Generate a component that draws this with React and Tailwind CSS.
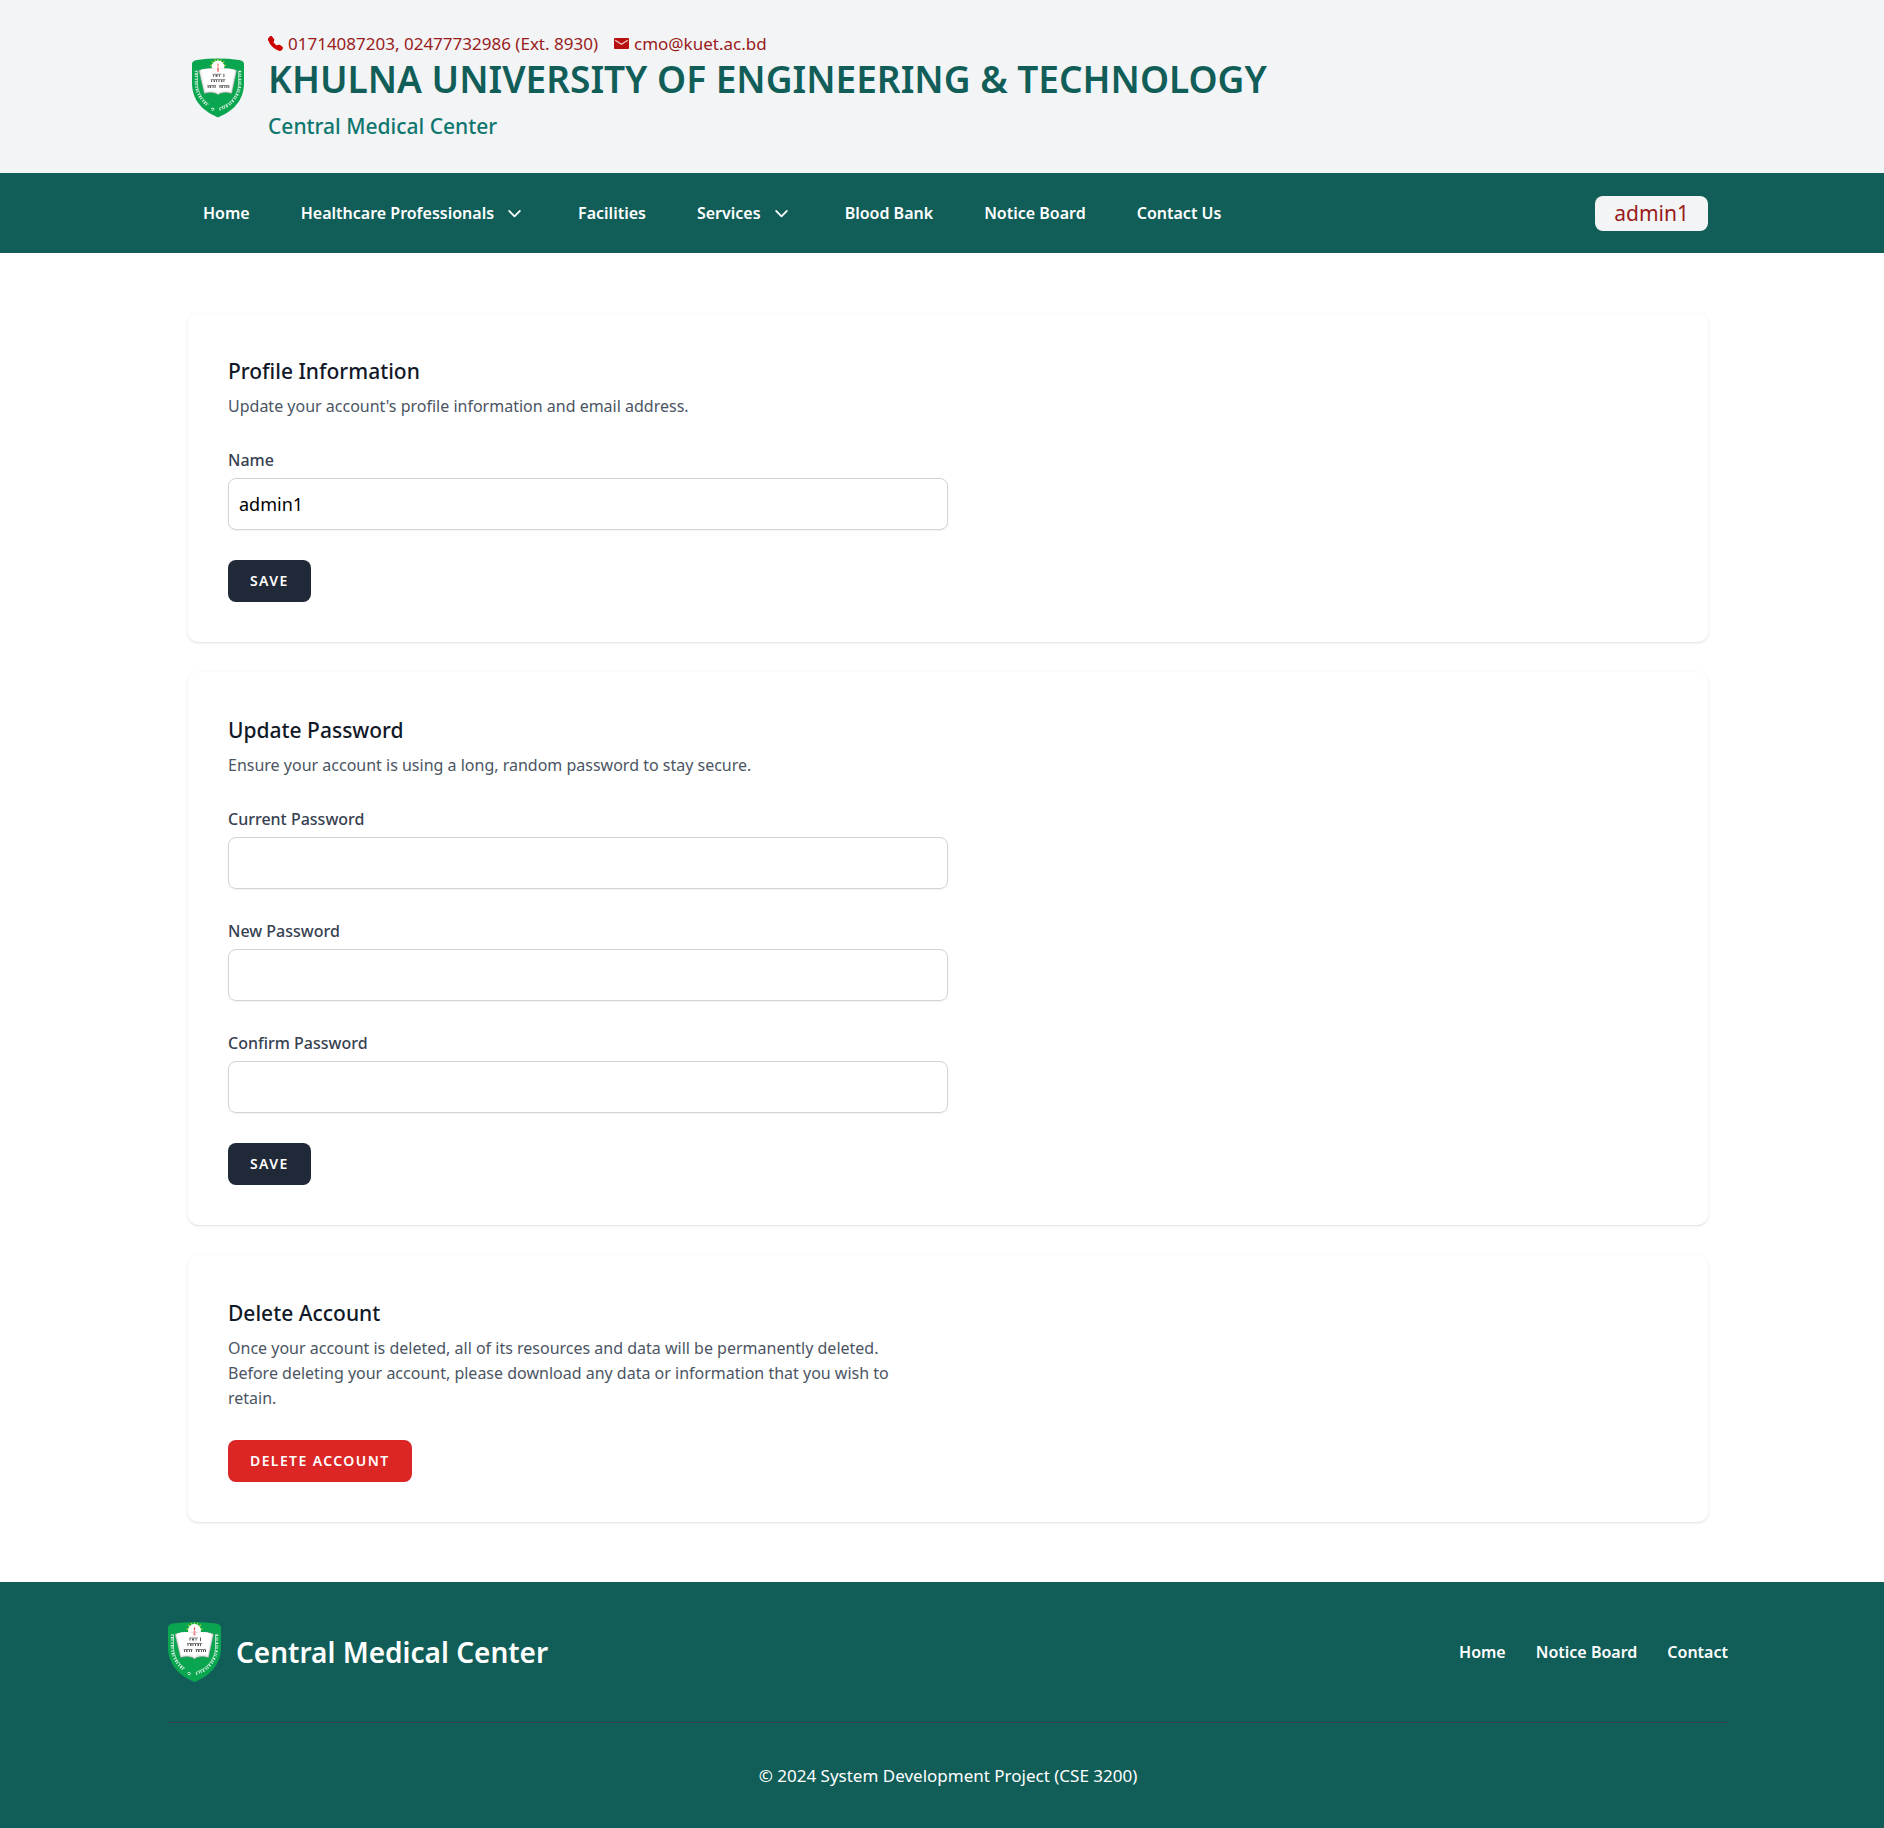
import React from "react";
import { BsTelephoneFill } from "react-icons/bs";

const navItems = [
  { label: "Home" },
  { label: "Healthcare Professionals", menu: true },
  { label: "Facilities" },
  { label: "Services", menu: true },
  { label: "Blood Bank" },
  { label: "Notice Board" },
  { label: "Contact Us" },
];

const footerLinks = ["Home", "Notice Board", "Contact"];

function Crest({ className }) {
  return (
    <svg viewBox="0 0 106 120" className={className} role="img" aria-label="University crest">
      <path d="M0 10 Q1 5 10 3 Q53 -3 96 3 Q105 5 106 10 V50 C106 78 92 104 53 120 C14 104 0 78 0 50 Z" fill="#0aa64f" />
      <path
        d="M53 1 V27 M46 2 L60 26 M60 2 L46 26 M40 6 L66 22 M66 6 L40 22 M37 14 H69"
        stroke="#b5d334"
        strokeWidth="2.5"
      />
      <circle cx="53" cy="17" r="13" fill="#ffffff" />
      <path
        d="M14 24 Q34 18 50 22 L53 24 L56 22 Q72 18 91 24 L81 71 Q68 67 57 71 L53 74 L49 71 Q38 67 25 71 Z"
        fill="#e9ecea"
        stroke="#7d8a83"
        strokeWidth="1"
      />
      <path d="M18 23 Q36 18 51 22 L53 24 L55 22 Q70 18 87 23 L79 67 Q66 63 56 67 L53 70 L50 67 Q40 63 27 67 Z" fill="#ffffff" />
      <path d="M53 9 Q50 14 53 18 Q56 14 53 9 Z" fill="#ef4b4b" />
      <path d="M53 18 V27" stroke="#f08a8a" strokeWidth="4" />
      <g fill="none" stroke="#555555">
        <path d="M42 32 H60 M38 43 H68 M31 55 H49 M55 55 H76" strokeWidth="1.5" />
        <path d="M43 35 H60" strokeWidth="4" strokeDasharray="2 3 4 3" />
        <path d="M39 46 H68" strokeWidth="4" strokeDasharray="2 3 3 2 2 3" />
        <path d="M32 58 H49 M56 58 H76" strokeWidth="4" strokeDasharray="2 2 3 3 2 2" />
        <path d="M65 31 V38" strokeWidth="2" />
      </g>
      <g fill="none" stroke="#d9f1e2">
        <path d="M11 25 V50 C11 66 19 82 34 93" strokeWidth="1.5" />
        <path d="M8 25 V50 C8 67 16 83 32 96" strokeWidth="5" strokeDasharray="2 3 3 2 2 4" />
        <path d="M95 25 V50 C95 66 87 82 72 93 L56 101" strokeWidth="1.5" />
        <path d="M98 25 V50 C98 67 90 83 74 96 L56 104" strokeWidth="5" strokeDasharray="3 3 2 2 2 4" />
        <path d="M39 102 q5 -3 6 1 q-1 4 -5 2" strokeWidth="2" />
      </g>
    </svg>
  );
}

function MailIcon() {
  return (
    <svg viewBox="0 0 15 11" className="h-[11px] w-[15px]" aria-hidden="true">
      <rect width="15" height="11" rx="1" fill="#b80f0f" />
      <path d="M1.2 2.2 L7.5 6.2 L13.8 2.2" fill="none" stroke="#f3c9c9" strokeWidth="1.2" />
    </svg>
  );
}

function Chevron() {
  return (
    <svg
      viewBox="0 0 20 20"
      className="ml-2 size-[25px]"
      fill="none"
      stroke="currentColor"
      strokeWidth="1.4"
      strokeLinecap="round"
      strokeLinejoin="round"
      aria-hidden="true"
    >
      <path d="M5.7 7.9 L10 12.3 L14.3 7.9" />
    </svg>
  );
}

function Card({ title, text, children }) {
  return (
    <section className="rounded-[10px] bg-white p-10 shadow-sm">
      <div className="max-w-[720px]">
        <h2 className="text-[21px] leading-9 font-medium text-[#111827]">{title}</h2>
        <p className="mt-[5px] max-w-[690px] text-base leading-[25px] text-[#4b5563]">{text}</p>
        {children}
      </div>
    </section>
  );
}

function Field({ id, label, type = "text", value }) {
  return (
    <div>
      <label htmlFor={id} className="block text-base leading-[25px] font-medium text-[#374151]">
        {label}
      </label>
      <input
        id={id}
        type={type}
        defaultValue={value}
        className="mt-[5px] block h-[52px] w-full rounded-lg border border-[#d1d5db] bg-white px-[10px] text-lg text-black shadow-[0_1px_2px_rgba(0,0,0,0.05)]"
      />
    </div>
  );
}

function ActionButton({ danger, children }) {
  return (
    <button
      type="button"
      className={
        "h-[42px] rounded-lg px-[22px] text-sm font-semibold tracking-widest text-white uppercase " +
        (danger ? "bg-[#dc2626]" : "bg-[#1f2937]")
      }
    >
      {children}
    </button>
  );
}

export default function App() {
  return (
    <div className="min-h-screen bg-white font-['Noto_Sans','Open_Sans',sans-serif]">
      <header className="bg-[#f3f4f6] pl-3">
        <div className="mx-auto flex max-w-[1600px] items-center gap-5 px-10 pt-[31px] pb-[29px]">
          <Crest className="mx-1 h-[60px] w-[52px] shrink-0" />
          <div>
            <div className="flex text-[17px] leading-[25px] text-[#991b1b]">
              <a href="tel:01714087203" className="flex items-center gap-[5px]">
                <BsTelephoneFill className="size-[15px] text-[#cc0000]" aria-hidden="true" />
                01714087203, 02477732986 (Ext. 8930)
              </a>
              <a href="mailto:cmo@kuet.ac.bd" className="ml-4 flex items-center gap-[5px]">
                <MailIcon />
                cmo@kuet.ac.bd
              </a>
            </div>
            <h1 className="text-[37px] leading-[45px] font-semibold text-[#115e59]">
              KHULNA UNIVERSITY OF ENGINEERING &amp; TECHNOLOGY
            </h1>
            <p className="mt-2 text-[21px] leading-[35px] font-medium text-[#0f766e]">Central Medical Center</p>
          </div>
        </div>
      </header>

      <nav className="bg-[#115e59] pl-3">
        <div className="mx-auto flex h-20 max-w-[1600px] items-center justify-between px-10">
          <div className="flex items-center gap-[51px] pl-[15px] text-base font-semibold text-white">
            {navItems.map(({ label, menu }) =>
              menu ? (
                <button key={label} type="button" className="flex items-center">
                  {label}
                  <Chevron />
                </button>
              ) : (
                <a key={label} href="#">
                  {label}
                </a>
              )
            )}
          </div>
          <button type="button" className="h-[35px] rounded-lg bg-[#f3f4f6] px-[19px] text-[21px] leading-[35px] text-[#991b1b]">
            admin1
          </button>
        </div>
      </nav>

      <main className="pl-3">
        <div className="mx-auto flex max-w-[1600px] flex-col gap-[30px] px-10 py-[60px]">
          <Card title="Profile Information" text="Update your account's profile information and email address.">
            <form className="mt-[29px] flex flex-col items-start gap-[30px]">
              <div className="w-full">
                <Field id="name" label="Name" value="admin1" />
              </div>
              <ActionButton>Save</ActionButton>
            </form>
          </Card>

          <Card title="Update Password" text="Ensure your account is using a long, random password to stay secure.">
            <form className="mt-[29px] flex flex-col items-start gap-[30px]">
              <div className="flex w-full flex-col gap-[30px]">
                <Field id="current-password" label="Current Password" type="password" />
                <Field id="new-password" label="New Password" type="password" />
                <Field id="confirm-password" label="Confirm Password" type="password" />
              </div>
              <ActionButton>Save</ActionButton>
            </form>
          </Card>

          <Card
            title="Delete Account"
            text="Once your account is deleted, all of its resources and data will be permanently deleted. Before deleting your account, please download any data or information that you wish to retain."
          >
            <div className="mt-[29px] flex">
              <ActionButton danger>Delete Account</ActionButton>
            </div>
          </Card>
        </div>
      </main>

      <footer className="bg-[#115e59] pl-3 text-white">
        <div className="mx-auto max-w-[1560px] py-10">
          <div className="flex items-center justify-between">
            <a href="#" className="flex items-center gap-[15px]">
              <Crest className="h-[60px] w-[53px]" />
              <span className="text-[28px] leading-10 font-semibold">Central Medical Center</span>
            </a>
            <div className="flex gap-[30px] text-base font-semibold">
              {footerLinks.map((label) => (
                <a key={label} href="#">
                  {label}
                </a>
              ))}
            </div>
          </div>
          <hr className="my-10 border-[#374151]" />
          <p className="text-center text-[17px] leading-[25px]">© 2024 System Development Project (CSE 3200)</p>
        </div>
      </footer>
    </div>
  );
}
